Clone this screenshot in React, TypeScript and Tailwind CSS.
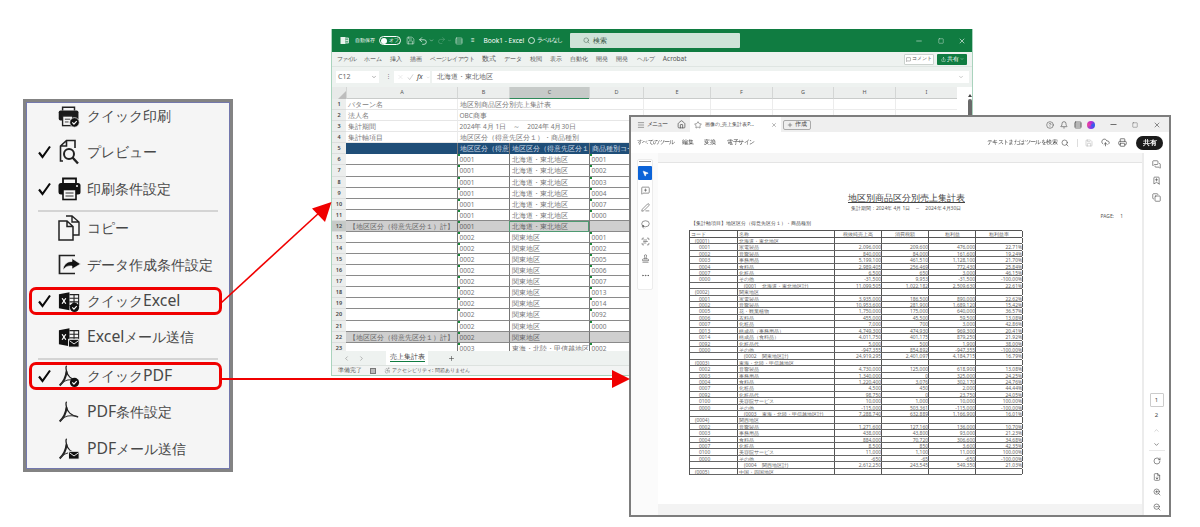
import React from "react";
import { Save, Undo2, Redo2, Search, Minus, Square, X, Menu, Home, Star, Plus, CircleHelp, Bell, Rows3, CloudUpload, Printer, MousePointer2, MessageSquarePlus, PenLine, Lasso, ScanText, Stamp, MoreHorizontal, MessagesSquare, BookmarkPlus, Copy, ChevronUp, ChevronDown, RotateCw, FileDown, ZoomIn, ZoomOut, ChevronLeft, ChevronRight, MessageSquare, Share, Accessibility } from "lucide-react";

const Badge = ({ kind }: { kind?: "check" | "mail" }) => {
  if (kind === "check") return (
    <g><circle cx="18" cy="19" r="5" fill="#111" /><path d="M15.6 19l1.8 1.8 3-3.2" stroke="#fff" strokeWidth="1.3" fill="none" /></g>
  );
  if (kind === "mail") return (
    <g><rect x="11.5" y="14.5" width="11.5" height="8.5" fill="#111" stroke="#f5f5f5" strokeWidth="1" /><path d="M12.5 16l5 3.6 5-3.6" stroke="#f5f5f5" strokeWidth="1" fill="none" /></g>
  );
  return null;
};

const PdfGlyph = ({ kind }: { kind?: "check" | "mail" }) => (
  <svg width="22" height="24" viewBox="0 0 24 24" className="shrink-0">
    <path d="M9.5 1C8.5 1.5 8.6 4 9.3 7 10.5 12 13 15.5 22 17.5" stroke="#222" strokeWidth="1.5" fill="none" />
    <path d="M9.3 7C8.8 12.5 5.5 19 1.8 22.3" stroke="#222" strokeWidth="2.2" fill="none" />
    <path d="M2.5 22C6 16.5 13 15 21.5 17" stroke="#333" strokeWidth="1.2" fill="none" />
    <Badge kind={kind} />
  </svg>
);

const ExcelGlyph = ({ kind }: { kind?: "check" | "mail" }) => (
  <svg width="22" height="24" viewBox="0 0 24 24" className="shrink-0">
    <path d="M1 4.5L12.5 2.5V22L1 20Z" fill="#111" />
    <path d="M4.5 9l4 6M8.5 9l-4 6" stroke="#fff" strokeWidth="1.4" />
    <path d="M12.5 5H22.5V17H12.5M17.5 5V17M12.5 9H22.5M12.5 13H22.5" stroke="#222" strokeWidth="1.2" fill="none" />
    <Badge kind={kind} />
  </svg>
);

const PrintCheck = () => (
  <svg width="22" height="24" viewBox="0 0 24 24" className="shrink-0">
    <path d="M5 6V2.5H18V6" stroke="#222" strokeWidth="1.6" fill="none" />
    <rect x="0.8" y="6" width="21.5" height="11" rx="2" fill="#1a1a1a" />
    <rect x="5" y="12" width="11" height="10.5" fill="#f5f5f5" stroke="#222" strokeWidth="1.5" />
    <path d="M7.5 15.5h6M7.5 18.5h4" stroke="#333" strokeWidth="1" />
    <circle cx="18" cy="19" r="5.2" fill="#111" stroke="#f5f5f5" strokeWidth="0.8" />
    <path d="M15.6 19l1.8 1.8 3-3.2" stroke="#fff" strokeWidth="1.3" fill="none" />
  </svg>
);

const Preview = () => (
  <svg width="22" height="26" viewBox="0 0 22 26" className="shrink-0">
    <path d="M5 22H2.5V7L8.5 1.5H17V9M8.5 1.5V7H2.5" stroke="#222" strokeWidth="1.6" fill="none" />
    <circle cx="11" cy="15" r="5" stroke="#222" strokeWidth="2" fill="#f5f5f5" />
    <path d="M14.5 18.5L20 24.5" stroke="#222" strokeWidth="2.4" />
  </svg>
);

const PrintBig = () => (
  <svg width="23" height="24" viewBox="0 0 23 24" className="shrink-0">
    <path d="M5 6V1.5H18V6" stroke="#111" strokeWidth="1.8" fill="none" />
    <rect x="0.5" y="6" width="22" height="11.5" rx="2.5" fill="#111" />
    <rect x="5" y="12.5" width="13" height="10" fill="#f5f5f5" stroke="#111" strokeWidth="1.6" />
    <path d="M7.5 16h8M7.5 19h8" stroke="#333" strokeWidth="1" />
    <circle cx="19" cy="9" r="1" fill="#f5f5f5" />
  </svg>
);

const CopyGlyph = () => (
  <svg width="22" height="26" viewBox="0 0 22 26" className="shrink-0">
    <path d="M8 1H14L21 7V20H15M14 1V7H21" stroke="#222" strokeWidth="1.4" fill="none" />
    <path d="M1 6H9L15 11.5V25H1Z M9 6V11.5H15" stroke="#222" strokeWidth="1.5" fill="#f5f5f5" />
  </svg>
);

const Export = () => (
  <svg width="23" height="21" viewBox="0 0 23 21" className="shrink-0">
    <path d="M17 1.5H1.5V19.5H17" stroke="#222" strokeWidth="1.7" fill="none" />
    <path d="M14 4.5L22.5 10 14 15V12C10 11.5 7.5 12.5 5 16 5.5 10.5 9 7.5 14 7.5Z" fill="#111" stroke="#f5f5f5" strokeWidth="0.6" />
  </svg>
);

const Tick = ({ on }: { on?: boolean }) => (
  <span className="w-[13px] h-[14px] shrink-0">
    {on && (
      <svg width="13" height="14" viewBox="0 0 13 14">
        <path d="M1 7.5L4.5 12 12 1.5" stroke="#0a0a0a" strokeWidth="2.1" fill="none" />
      </svg>
    )}
  </span>
);

const MenuItem = ({ on, icon, label, boxed, top }: { on?: boolean; icon: React.ReactNode; label: string; boxed?: boolean; top: string }) => (
  <div className={`${top} h-[28px] mx-[3px] w-[193px] flex items-center pl-[9px] rounded-[7px] ${boxed ? "ring-[3px] ring-inset ring-[#f00000]" : ""}`}>
    <Tick on={on} />
    <span className="ml-[7px] w-[22px] h-[26px] flex items-center justify-center shrink-0">{icon}</span>
    <span className="ml-[7px] text-[14.4px] leading-none text-[#484848] whitespace-nowrap">
      {label.split(/([A-Za-z]+)/).map((part, i) =>
        /[A-Za-z]/.test(part) ? <span key={i} className="text-[15.8px]">{part}</span> : <span key={i}>{part}</span>
      )}
    </span>
  </div>
);

const Sep = ({ top }: { top: string }) => <div className={`${top} mx-[12px] h-[2px] bg-[#d4d4d4]`} />;

const SideMenu = () => (
  <div className="absolute left-[23px] top-[99px] w-[210px] h-[373px] border-[3px] border-[#838383] bg-[#f5f5f5] shadow-[inset_0_0_0_1px_#7378ad]">
    <div className="flex flex-col">
      <MenuItem top="mt-0" icon={<PrintCheck />} label="クイック印刷" />
      <MenuItem top="mt-[8.4px]" on icon={<Preview />} label="プレビュー" />
      <MenuItem top="mt-[8.4px]" on icon={<PrintBig />} label="印刷条件設定" />
      <Sep top="mt-[7px]" />
      <MenuItem top="mt-[2px]" icon={<CopyGlyph />} label="コピー" />
      <MenuItem top="mt-[9px]" icon={<Export />} label="データ作成条件設定" />
      <MenuItem top="mt-[8px]" on boxed icon={<ExcelGlyph kind="check" />} label="クイックExcel" />
      <MenuItem top="mt-[8px]" icon={<ExcelGlyph kind="mail" />} label="Excelメール送信" />
      <Sep top="mt-[7px]" />
      <MenuItem top="mt-[2px]" on boxed icon={<PdfGlyph kind="check" />} label="クイックPDF" />
      <MenuItem top="mt-[8px]" icon={<PdfGlyph />} label="PDF条件設定" />
      <MenuItem top="mt-[9px]" icon={<PdfGlyph kind="mail" />} label="PDFメール送信" />
    </div>
  </div>
);

type XRow = { a?: string; b?: string; c?: string; d?: string; kind?: "meta" | "head" | "data" | "total" };
const KANTO = ["0001", "0002", "0005", "0006", "0007", "0013", "0014", "0092", "0000"];
const TOTAL = "【地区区分（得意先区分１）計】";
const xlRows: XRow[] = [
  { a: "パターン名", b: "地区別商品区分別売上集計表", kind: "meta" },
  { a: "法人名", b: "OBC商事", kind: "meta" },
  { a: "集計期間", b: "2024年 4月 1日　～　2024年 4月30日", kind: "meta" },
  { a: "集計軸項目", b: "地区区分（得意先区分１）・商品種別", kind: "meta" },
  { b: "地区区分（得意先区分１）", c: "地区区分（得意先区分１）", d: "商品種別コード", kind: "head" },
  ...["0001", "0002", "0003", "0004", "0007", "0000"].map((d) => ({ b: "0001", c: "北海道・東北地区", d, kind: "data" as const })),
  { a: TOTAL, b: "0001", c: "北海道・東北地区", kind: "total" },
  ...KANTO.map((d) => ({ b: "0002", c: "関東地区", d, kind: "data" as const })),
  { a: TOTAL, b: "0002", c: "関東地区", kind: "total" },
  { b: "0003", c: "東海・北陸・甲信越地区", d: "0002", kind: "data" },
];

const XCell = ({ text, kind, col, selected, wide }: { text?: string; kind?: XRow["kind"]; col: string; selected?: boolean; wide?: boolean }) => {
  const base = "relative overflow-hidden whitespace-nowrap leading-[11px] text-[6.5px] pl-[1.5px] ";
  const tint =
    kind === "head" ? "bg-[#1f4e78] text-[#cfdbe6] " :
    kind === "total" ? "bg-[#cfcfcf] text-[#666] border-b border-b-[#8a8a8a] " :
    kind === "data" ? "bg-white text-[#777] border-b border-b-[#8a8a8a] " :
    "bg-white text-[#777] border-b border-b-[#e6e6e6] ";
  const vline = kind && kind !== "meta" && col !== "a" ? "border-l border-l-[#777] " : col !== "a" && kind === "meta" ? "border-l border-l-[#ececec] " : "";
  const sel = selected ? "outline outline-1 -outline-offset-1 outline-[#4f9a72] " : "";
  const indent = col === "a" && kind === "total" ? "pl-[3px] text-[#444] " : col === "a" ? "pl-[2px] " : "";
  const mark = (kind === "data" || kind === "total") && (col === "b" || (col === "d" && kind === "data"));
  return (
    <div className={base + tint + vline + sel + indent + (wide ? "col-span-3 " : "")}>
      {mark && <i className="absolute left-0 top-0 w-[2px] h-[2px] bg-[#1b8a3a]" />}
      {text}
    </div>
  );
};

const HEADS = ["A", "B", "C", "D", "E", "F", "G", "H", "I"];
const TABS: [string, string][] = [
  ["ファイル", "text-[5.5px] tracking-[-1.2px]"],
  ["ホーム", "text-[5.5px] tracking-[-0.3px]"],
  ["挿入", "text-[6.2px]"],
  ["描画", "text-[6.2px]"],
  ["ページレイアウト", "text-[5.5px] tracking-[-0.5px]"],
  ["数式", "text-[6.5px]"],
  ["データ", "text-[5.5px] tracking-[-0.3px]"],
  ["校閲", "text-[6.3px]"],
  ["表示", "text-[6.3px]"],
  ["自動化", "text-[6.1px]"],
  ["開発", "text-[6.3px]"],
  ["開発", "text-[6.3px]"],
  ["ヘルプ", "text-[5.5px]"],
  ["Acrobat", "text-[6.5px]"],
];

const ExcelWindow = () => (
  <div className="absolute left-[331px] top-[29px] w-[642px] h-[347px] flex flex-col bg-[#eef2f0] border-x border-b border-[#a9d3bd] overflow-hidden">
    <div className="h-[23px] bg-[#107c41] flex items-center text-white shrink-0 pl-[8px]">
      <svg width="9" height="9" viewBox="0 0 9 9" className="shrink-0"><rect x="0.5" y="1" width="5" height="7" fill="#e8f3ed" /><path d="M5.5 2H8.5V7H5.5M7 2V7M5.5 4.5H8.5" stroke="#e8f3ed" strokeWidth="0.8" fill="none" /></svg>
      <span className="ml-[6px] text-[5px] w-[20px]">自動保存</span>
      <span className="ml-[4px] w-[22px] h-[9px] rounded-full border border-white flex items-center pl-[1px] gap-[2px] text-[4.5px]"><i className="w-[6px] h-[6px] rounded-full bg-white" />オフ</span>
      <Save size={9} strokeWidth={1.3} className="ml-[5px]" />
      <Undo2 size={10} strokeWidth={1.6} className="ml-[3px]" />
      <ChevronDown size={5} className="ml-[1px]" />
      <Redo2 size={9} strokeWidth={1.2} className="ml-[3px] opacity-40" />
      <ChevronDown size={5} className="ml-[1px] opacity-40" />
      <Rows3 size={8} strokeWidth={1.4} className="ml-[3px]" />
      <span className="ml-[8px] text-[6px]">≡</span>
      <span className="ml-[9px] text-[6.6px] whitespace-nowrap">Book1 - Excel</span>
      <span className="ml-[4px] w-[7px] h-[7px] rounded-full border border-white/80 shrink-0" />
      <span className="ml-[2px] w-[22px] text-[5.5px] tracking-[-1px] whitespace-nowrap">ラベルなし</span>
      <span className="ml-[11px] w-[170px] h-[15px] rounded-[1px] bg-[#cfe3d8] flex items-center pl-[13px] gap-[3px] text-[#3d5a4a] shrink-0">
        <Search size={7} strokeWidth={1.6} />
        <span className="text-[6.5px]">検索</span>
      </span>
      <span className="flex-1" />
      <Minus size={8} strokeWidth={1.5} />
      <Square size={6} strokeWidth={1.5} className="ml-[15px]" />
      <X size={8} strokeWidth={1.8} className="ml-[14px] mr-[6px]" />
    </div>

    <div className="h-[15px] flex items-center pl-[5px] gap-[8.2px] text-[#555] shrink-0 border-b border-[#dfe5e2] whitespace-nowrap">
      {TABS.map(([t, c], i) => <span key={i} className={c}>{t}</span>)}
      <span className="flex-1" />
      <span className="w-[30px] h-[11px] bg-white border border-[#ccd3cf] flex items-center justify-center gap-[1px] text-[5px] rounded-[1px]"><MessageSquare size={5} />コメント</span>
      <span className="w-[30px] h-[11px] mr-[5px] -ml-[5px] bg-[#107c41] text-white flex items-center justify-center gap-[1px] text-[5.5px] rounded-[1px]"><Share size={5} />共有<ChevronDown size={4} /></span>
    </div>

    <div className="h-[20px] flex items-center pl-[4px] text-[#666] shrink-0">
      <span className="w-[43px] h-[12px] bg-white flex items-center justify-between px-[2px] text-[7px]">C12<ChevronDown size={6} /></span>
      <span className="ml-[7px] text-[5px]">⋮</span>
      <span className="ml-[3px] w-[36px] h-[12px] bg-white flex items-center gap-[3px] pl-[3px] text-[#c0c0c0]">
        <X size={8} strokeWidth={1} />
        <svg width="8" height="8" viewBox="0 0 8 8"><path d="M1 4.5L3 7 7 1" stroke="#c0c0c0" fill="none" strokeWidth="0.8" /></svg>
        <span className="italic text-[#444] text-[7px] [font-family:'Liberation_Serif',serif]">fx</span>
        <ChevronDown size={5} />
      </span>
      <span className="ml-[2px] flex-1 mr-[3px] h-[12px] bg-white flex items-center justify-between px-[5px] text-[6.5px]">北海道・東北地区<ChevronDown size={6} className="text-[#999]" /></span>
    </div>

    <div className="flex-1 flex min-h-0 bg-white">
      <div className="w-[625px]">
        <div className="grid grid-cols-[14px_111px_52px_80px_54px_67px_62px_61px_62px_62px]">
          <div className="bg-[#e8eae9] h-[12px] flex items-end justify-end"><svg width="8" height="8" viewBox="0 0 8 8"><path d="M8 0V8H0Z" fill="#bdbdbd" /></svg></div>
          {HEADS.map((h) => (
            <div key={h} className={`h-[12px] text-[5.5px] leading-[10px] text-center text-[#555] border-l border-l-[#d4d6d5] ${h === "C" ? "bg-[#c6cac8] border-b border-b-[#2f8a5a]" : "bg-[#eceeed] border-b border-b-[#c9cbca]"}`}>{h}</div>
          ))}
        </div>
        <div className="grid grid-cols-[14px_111px_52px_80px_54px_67px_62px_61px_62px_62px] auto-rows-[11.08px]">
          {xlRows.map((r, i) => (
            <React.Fragment key={i}>
              <div className={`text-[5.5px] leading-[11px] text-center text-[#444] font-semibold border-b border-b-[#dcdedd] ${i === 11 ? "bg-[#c6cac8]" : "bg-[#eceeed]"}`}>{i + 1}</div>
              <XCell col="a" text={r.a} kind={r.kind} />
              {r.kind === "meta" ? (
                <XCell col="b" text={r.b} kind={r.kind} wide />
              ) : (
                <>
                  <XCell col="b" text={r.b} kind={r.kind} />
                  <XCell col="c" text={r.c} kind={r.kind} selected={i === 11} />
                  <XCell col="d" text={r.d} kind={r.kind} />
                </>
              )}
              {[0, 1, 2, 3, 4].map((k) => <div key={k} className="border-l border-b border-[#ececec]" />)}
            </React.Fragment>
          ))}
        </div>
      </div>
      <div className="w-[15px] flex flex-col items-center pt-[1px] bg-white">
        <span className="w-0 h-0 border-x-[2px] border-x-transparent border-b-[3px] border-b-[#444] mt-[6px] ml-[10px]" />
        <span className="w-[4px] h-[60px] mt-[2px] ml-[10px] bg-[#6a6a6a] rounded-full" />
      </div>
    </div>

    <div className="absolute left-0 right-0 bottom-[10px] h-[14px] bg-[#eef2f0] flex items-center text-[#888] pl-[11px]">
      <ChevronLeft size={7} />
      <ChevronRight size={7} className="ml-[8px]" />
      <span className="ml-[21px] w-[42px] h-full bg-white flex justify-center pt-[1px] text-[6.5px] text-[#444]"><span className="h-[10px] border-b border-b-[#107c41] leading-[10px]">売上集計表</span></span>
      <Plus size={7} strokeWidth={2} className="ml-[20px] text-[#444]" />
    </div>
    <div className="absolute left-0 right-0 bottom-0 h-[10px] bg-[#f2f4f3] flex items-center pl-[6px] text-[#555] border-t border-[#dde2df]">
      <span className="text-[5.5px]">準備完了</span>
      <span className="ml-[8px] w-[6px] h-[6px] border border-[#777] bg-[#bbb]" />
      <Accessibility size={7} strokeWidth={1.2} className="ml-[8px]" />
      <span className="ml-[1px] text-[4.8px]">アクセシビリティ: 問題ありません</span>
    </div>
  </div>
);

type PRow = [string, string, string?, string?, string?, string?];
const pRows: PRow[] = [
  ["(0001)", "北海道・東北地区"],
  ["0001", "家電製品", "2,096,000", "209,600", "476,000", "22.71%"],
  ["0002", "音響製品", "840,000", "84,000", "161,600", "19.24%"],
  ["0003", "事務用品", "5,199,100", "461,510", "1,128,100", "21.70%"],
  ["0004", "食料品", "2,989,405", "256,469", "772,430", "25.84%"],
  ["0007", "化粧品", "6,500", "650", "3,000", "46.15%"],
  ["0000", "その他", "-31,500", "9,953", "-31,500", "-100.00%"],
  ["", "　(0001　北海道・東北地区計)", "11,099,505", "1,022,182", "2,509,630", "22.61%"],
  ["(0002)", "関東地区"],
  ["0001", "家電製品", "3,935,000", "186,500", "890,000", "22.62%"],
  ["0002", "音響製品", "10,953,600", "281,900", "1,689,120", "15.42%"],
  ["0005", "花・観葉植物", "1,750,000", "175,000", "640,000", "36.57%"],
  ["0006", "衣料品", "455,000", "45,500", "59,500", "13.08%"],
  ["0007", "化粧品", "7,000", "700", "3,000", "42.86%"],
  ["0013", "構成品（事務用品）", "4,749,300", "474,930", "969,300", "20.41%"],
  ["0014", "構成品（食料品）", "4,011,750", "401,175", "879,250", "21.92%"],
  ["0092", "化粧品代", "5,000", "500", "1,900", "38.00%"],
  ["0000", "その他", "-947,355", "854,892", "-947,355", "-100.00%"],
  ["", "　(0002　関東地区計)", "24,919,295", "2,401,097", "4,184,715", "16.79%"],
  ["(0003)", "東海・北陸・甲信越地区"],
  ["0002", "音響製品", "4,730,000", "125,000", "618,900", "13.08%"],
  ["0003", "事務用品", "1,340,000", "0", "325,000", "24.25%"],
  ["0004", "食料品", "1,220,400", "3,076", "302,170", "24.76%"],
  ["0007", "化粧品", "4,500", "450", "2,000", "44.44%"],
  ["0092", "化粧品代", "98,750", "0", "23,750", "24.05%"],
  ["0100", "美容院サービス", "10,000", "1,000", "10,000", "100.00%"],
  ["0000", "その他", "-115,000", "503,361", "-115,000", "-100.00%"],
  ["", "　(0003　東海・北陸・甲信越地区計)", "7,288,740", "632,889", "1,166,900", "16.01%"],
  ["(0004)", "関西地区"],
  ["0002", "音響製品", "1,271,600", "127,160", "136,000", "10.70%"],
  ["0003", "事務用品", "438,000", "43,800", "93,000", "21.23%"],
  ["0004", "食料品", "884,000", "70,720", "306,600", "34.68%"],
  ["0007", "化粧品", "8,500", "850", "3,600", "42.35%"],
  ["0100", "美容院サービス", "11,000", "1,100", "11,000", "100.00%"],
  ["0000", "その他", "-650", "-65", "-650", "-100.00%"],
  ["", "　(0004　関西地区計)", "2,612,250", "243,545", "549,350", "21.03%"],
  ["(0005)", "中国・四国地区"],
];

const PCOLS = "grid grid-cols-[48px_97px_47px_47px_47px_47px]";
const cell = "border-r border-r-[#555] h-full overflow-hidden whitespace-nowrap";

const PdfTable = () => (
  <div className="ml-[31px] mt-[3px] w-[333px] border-l border-t border-[#555] text-[4.9px] text-[#666] [font-family:'Liberation_Serif','Noto_Sans_CJK_JP',serif]">
    <div className={`${PCOLS} h-[7px] leading-[6.5px] border-b border-b-[#555]`}>
      <div className={`${cell} pl-[1px]`}>コード</div>
      <div className={`${cell} pl-[1px]`}>名称</div>
      <div className={`${cell} text-center`}>税抜純売上高</div>
      <div className={`${cell} text-center`}>消費税額</div>
      <div className={`${cell} text-center`}>粗利益</div>
      <div className={`${cell} text-center`}>粗利益率</div>
    </div>
    {pRows.map((r, i) => (
      <div key={i} className={`${PCOLS} h-[6.42px] leading-[6.2px] border-b border-b-[#666]`}>
        <div className={`${cell} ${r[0].startsWith("(") ? "pl-[5px]" : "pl-[9px]"}`}>{r[0]}</div>
        <div className={`${cell} pl-[1px]`}>{r[1]}</div>
        {[2, 3, 4, 5].map((k) => <div key={k} className={`${cell} text-right`}>{r[k]}</div>)}
      </div>
    ))}
  </div>
);

const PdfWindow = () => (
  <div className="absolute left-[629px] top-[115px] w-[542px] h-[402px] border-2 border-[#7d7d7d] bg-white flex flex-col text-[#444] overflow-hidden">
    <div className="h-[15px] bg-[#efefef] flex items-center shrink-0 text-[#444]">
      <Menu size={8} strokeWidth={1.5} className="ml-[6px]" />
      <span className="ml-[2px] w-[25px] text-[5.5px] tracking-[-1px]">メニュー</span>
      <Home size={9} strokeWidth={1.8} className="ml-[5px]" />
      <div className="ml-[4px] w-[91px] h-full bg-white flex items-center pl-[4px]">
        <Star size={8} strokeWidth={1.5} />
        <span className="ml-[3px] text-[5.2px] w-[59px] whitespace-nowrap">画像の_売上集計表P...</span>
        <X size={6} strokeWidth={1.5} className="ml-[7px]" />
      </div>
      <div className="ml-[2px] w-[28px] h-[10px] border border-[#aaa] rounded-[2px] flex items-center justify-center gap-[2px] text-[5.5px]"><Plus size={6} strokeWidth={2} />作成</div>
      <span className="flex-1" />
      <CircleHelp size={8} strokeWidth={1.6} />
      <Bell size={8} strokeWidth={1.8} className="ml-[6px]" />
      <Rows3 size={8} strokeWidth={2} className="ml-[6px]" />
      <span className="ml-[5px] w-[8px] h-[8px] rounded-full bg-[conic-gradient(#c026d3,#2563eb,#7c3aed,#ec4899,#c026d3)]" />
      <Minus size={9} strokeWidth={2} className="ml-[14px]" />
      <Square size={6} strokeWidth={1.5} className="ml-[14px]" />
      <X size={8} strokeWidth={1.8} className="ml-[15px] mr-[8px]" />
    </div>
    <div className="h-[21px] shrink-0 flex items-center text-[#444] pl-[6px] whitespace-nowrap">
      <span className="w-[34px] text-[5.5px] tracking-[-0.6px]">すべてのツール</span>
      <span className="ml-[11px] text-[6px]">編集</span>
      <span className="ml-[10px] text-[6px]">変換</span>
      <span className="ml-[11px] text-[5.5px] tracking-[-0.5px]">電子サイン</span>
      <span className="flex-1" />
      <span className="text-[5.5px] tracking-[-0.6px]">テキストまたはツールを検索</span>
      <Search size={8} strokeWidth={1.8} className="ml-[4px]" />
      <span className="ml-[8px] w-px h-[8px] bg-[#ddd]" />
      <Save size={8} strokeWidth={1.2} className="ml-[7px] text-[#999]" />
      <CloudUpload size={9} strokeWidth={1.8} className="ml-[8px]" />
      <Printer size={9} strokeWidth={1.8} className="ml-[8px]" />
      <span className="ml-[9px] mr-[6px] w-[27px] h-[14px] rounded-full bg-[#1b1b1b] text-white flex items-center justify-center text-[6.5px] font-semibold">共有</span>
    </div>
    <div className="flex-1 flex min-h-0">
      <div className="w-[27px] bg-[#fbfbfb] pt-[6px] pl-[6px]">
        <div className="w-[16px] h-[131px] bg-white rounded-[2px] border border-[#ececec] flex flex-col items-center text-[#444]">
          <span className="w-[12px] h-[1px] bg-[#999] mt-[1px]" />
          <span className="mt-[4px] w-[14px] h-[14px] rounded-[1px] bg-[#0b63d8] flex items-center justify-center"><MousePointer2 size={7} fill="#fff" stroke="#fff" /></span>
          <MessageSquarePlus size={9} strokeWidth={1.5} className="mt-[6px]" />
          <PenLine size={9} strokeWidth={1.5} className="mt-[8px]" />
          <Lasso size={9} strokeWidth={1.5} className="mt-[8px]" />
          <ScanText size={9} strokeWidth={1.5} className="mt-[8px]" />
          <Stamp size={9} strokeWidth={1.5} className="mt-[8px]" />
          <MoreHorizontal size={9} strokeWidth={1.5} className="mt-[8px]" />
        </div>
      </div>
      <div className="flex-1 flex flex-col min-w-0">
        <div className="h-[10px] bg-[#f6f6f6] border-b border-[#e4e4e4] shrink-0" />
        <div className="flex-1 bg-white min-h-0 pt-[29px]">
          <div className="ml-[190px] h-[12px] leading-[11px] text-[9.2px] text-[#444] underline underline-offset-[1px] [font-family:'Liberation_Serif','Noto_Sans_CJK_JP',serif]">地区別商品区分別売上集計表</div>
          <div className="ml-[193px] h-[8px] leading-[8px] text-[4.9px] text-[#555] [font-family:'Liberation_Serif','Noto_Sans_CJK_JP',serif]">集計期間：2024年 4月 1日　～　2024年 4月30日</div>
          <div className="h-[8px] leading-[8px] text-[4.9px] text-[#555] text-right pr-[19px] [font-family:'Liberation_Serif','Noto_Sans_CJK_JP',serif]">PAGE:　 1</div>
          <div className="ml-[33px] h-[7px] leading-[7px] text-[4.9px] text-[#444] whitespace-nowrap">【集計軸項目】地区区分（得意先区分１）・商品種別</div>
          <PdfTable />
        </div>
        <div className="h-[11px] bg-[#f3f3f3] shrink-0" />
      </div>
      <div className="w-[27px] border-l-2 border-l-[#ececec] flex flex-col items-center text-[#444] bg-white">
        <MessagesSquare size={9} strokeWidth={1.6} className="mt-[7px]" />
        <BookmarkPlus size={9} strokeWidth={1.6} className="mt-[7px]" />
        <Copy size={9} strokeWidth={1.6} className="mt-[8px]" />
        <span className="flex-1" />
        <span className="w-[14px] h-[14px] rounded-[1px] border border-[#ccc] text-[6px] flex items-center justify-center">1</span>
        <span className="mt-[3px] h-[10px] text-[6px] leading-[10px]">2</span>
        <ChevronUp size={7} strokeWidth={1.2} className="mt-[7px] text-[#888]" />
        <ChevronDown size={7} strokeWidth={2} className="mt-[7px]" />
        <span className="mt-[2px] w-[16px] h-px bg-[#e8e8e8]" />
        <RotateCw size={8} strokeWidth={1.8} className="mt-[6px]" />
        <FileDown size={8} strokeWidth={1.8} className="mt-[8px]" />
        <ZoomIn size={8} strokeWidth={1.8} className="mt-[7px]" />
        <ZoomOut size={8} strokeWidth={1.8} className="mt-[7px] mb-[4px]" />
      </div>
    </div>
  </div>
);

export default function App() {
  return (
    <div className="relative w-[1200px] h-[527px] bg-white overflow-hidden [font-family:'Noto_Sans_CJK_JP',sans-serif]">
      <div className="absolute inset-0 blur-[0.45px]">
        <SideMenu />
        <ExcelWindow />
        <PdfWindow />
      </div>
      <svg width="1200" height="527" className="absolute left-0 top-0 pointer-events-none">
        <path d="M221 303L320 212" stroke="#f00000" strokeWidth="1.6" fill="none" />
        <path d="M331.5 202L312 208.5 325 222Z" fill="#f00000" />
        <path d="M221 379H613" stroke="#f00000" strokeWidth="2" fill="none" />
        <path d="M630 379L612 370V388Z" fill="#f00000" />
      </svg>
    </div>
  );
}
